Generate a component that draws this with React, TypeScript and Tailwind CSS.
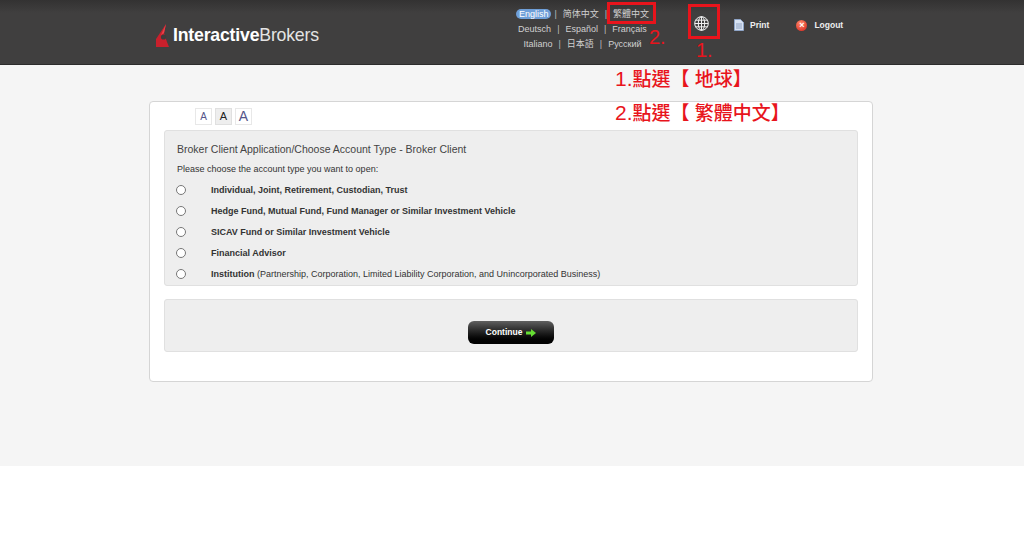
const accountTypes = [
  { label: 'Individual, Joint, Retirement, Custodian, Trust' },
  { label: 'Hedge Fund, Mutual Fund, Fund Manager or Similar Investment Vehicle' },
  { label: 'SICAV Fund or Similar Investment Vehicle' },
  { label: 'Financial Advisor' },
  { label: 'Institution', note: ' (Partnership, Corporation, Limited Liability Corporation, and Unincorporated Business)' },
]

const languageRows = [
  ['Deutsch', 'Español', 'Français'],
  ['Italiano', '日本語', 'Русский'],
]

function Sep() {
  return <span className="mx-[6px] text-[#bbbbbb]">|</span>
}

function Logo() {
  return (
    <div className="flex w-[175px] shrink-0 items-center">
      <svg width="15" height="24" viewBox="0 0 15 24" className="mr-[3px] shrink-0">
        <path d="M11 0 L5 9 L1 15 L1 23 L14 23 L12 18 L9 9 Z" fill="#c8202c" />
        <path d="M11 0 L6 11 L9 9 Z" fill="#e8434a" />
        <circle cx="8.5" cy="13" r="2.6" fill="#3d3c3c" />
      </svg>
      <span className="whitespace-nowrap text-[17.7px] leading-none tracking-[-0.2px] text-white">
        <span className="font-bold">Interactive</span>
        <span className="text-[#e4e4e4]">Brokers</span>
      </span>
    </div>
  )
}

function GlobeIcon() {
  return (
    <svg width="15" height="15" viewBox="0 0 15 15" fill="none" stroke="#f0f0f0" strokeWidth="1">
      <circle cx="7.5" cy="7.5" r="6.8" />
      <ellipse cx="7.5" cy="7.5" rx="3.2" ry="6.8" />
      <path d="M7.5 0.7 V14.3 M0.7 7.5 H14.3 M1.6 4.2 H13.4 M1.6 10.8 H13.4" />
    </svg>
  )
}

function Header() {
  return (
    <header className="flex h-[65px] items-start border-b border-[#2c2c2c] bg-[#3d3c3c] bg-gradient-to-b from-[#333232] to-[#403f3f] to-[20%] pl-[155px]">
      <div className="mt-[24px]">
        <Logo />
      </div>

      <div className="ml-[185px] mt-[7px] w-[135px] shrink-0 text-center text-[9px] leading-[15px] text-[#d0d0d0]">
        <div className="whitespace-nowrap">
          <span className="rounded-[5px] bg-[#6f9fd8] px-[3px] text-white">English</span>
          <span className="mx-[3px] text-[#bbbbbb]">|</span>
          <span className="ml-[3px]">简体中文</span>
          <Sep />
          <span>繁體中文</span>
        </div>
        {languageRows.map((row) => (
          <div key={row[0]} className="whitespace-nowrap">
            {row[0]}
            <Sep />
            {row[1]}
            <Sep />
            {row[2]}
          </div>
        ))}
      </div>

      <div className="ml-[44px] mt-[16px]">
        <GlobeIcon />
      </div>

      <div className="ml-[25px] mt-[18px] flex items-center text-[8.5px] font-bold leading-[14px] text-[#eeeeee]">
        <svg width="10" height="12" viewBox="0 0 10 12" className="mr-[6px]">
          <path d="M0.5 0.5 H6.5 L9.5 3.5 V11.5 H0.5 Z" fill="#d8e2f2" stroke="#8fa5c8" />
          <path d="M2 5 H8 M2 7 H8 M2 9 H8" stroke="#7f92b5" strokeWidth="0.8" />
        </svg>
        Print
      </div>

      <div className="ml-[27px] mt-[18px] flex items-center text-[8.5px] font-bold leading-[14px] text-[#eeeeee]">
        <span className="mr-[7px] flex h-[11px] w-[11px] items-center justify-center rounded-full bg-[radial-gradient(circle_at_40%_30%,#ff8a6a,#d3201a)] text-[9px] font-bold leading-none text-white">
          ×
        </span>
        Logout
      </div>
    </header>
  )
}

function FontSizeButtons() {
  return (
    <div className="ml-[45px] flex items-center gap-[3px] pt-[6px]">
      <button className="flex h-[17px] w-[17px] items-center justify-center border border-[#e8e8e8] bg-white text-[10px] text-[#55558a]">A</button>
      <button className="flex h-[17px] w-[17px] items-center justify-center border border-[#e0e0e0] bg-[#eeeeee] text-[11px] text-[#222222]">A</button>
      <button className="flex h-[17px] w-[17px] items-center justify-center border border-[#e8e8e8] bg-white text-[14px] text-[#55558a]">A</button>
    </div>
  )
}

export default function App() {
  return (
    <div className="relative h-[543px] w-[1024px] overflow-hidden bg-white font-['Liberation_Sans','Noto_Sans_CJK_TC',sans-serif]">
      <Header />

      <main className="h-[401px] bg-[#f5f5f5] pl-[149px] pt-[36px]">
        <div className="h-[281px] w-[724px] rounded-[4px] border border-[#d5d5d5] bg-white">
          <FontSizeButtons />

          <section className="ml-[14px] mt-[5px] h-[156px] w-[694px] rounded-[3px] border border-[#e0e0e0] bg-[#eeeeee] pl-[12px] pt-[11px]">
            <h1 className="text-[10.5px] leading-[14px] text-[#444444]">Broker Client Application/Choose Account Type - Broker Client</h1>
            <p className="mt-[7px] text-[9px] leading-[12px] text-[#333333]">Please choose the account type you want to open:</p>
            <div className="mt-[5px]">
              {accountTypes.map((item) => (
                <label key={item.label} className="flex h-[21px] items-center text-[9px] text-[#333333]">
                  <span className="-ml-[1px] -mt-[1px] h-[10px] w-[10px] rounded-full border border-[#777777] bg-white" />
                  <span className="ml-[25px]">
                    <span className="font-bold">{item.label}</span>
                    {item.note}
                  </span>
                </label>
              ))}
            </div>
          </section>

          <section className="ml-[14px] mt-[13px] flex h-[53px] w-[694px] justify-center rounded-[3px] border border-[#e0e0e0] bg-[#eeeeee] pt-[21px]">
            <button className="flex h-[23px] w-[86px] items-center justify-center rounded-[6px] bg-gradient-to-b from-[#606060] to-black text-[8.5px] font-bold text-white">
              Continue
              <svg width="10" height="8" viewBox="0 0 10 8" className="ml-[4px]">
                <path d="M0 2.5 H5 V0 L10 4 L5 8 V5.5 H0 Z" fill="#66dd33" />
              </svg>
            </button>
          </section>
        </div>
      </main>

      {/* red notes drawn on top of the screenshot */}
      <div className="absolute left-[607px] top-[2px] h-[22px] w-[49px] border-[3px] border-[#e8141c]" />
      <div className="absolute left-[688px] top-[4px] h-[35px] w-[32px] border-[3px] border-[#e8141c]" />
      <div className="absolute left-[649px] top-[26px] text-[20px] leading-[22px] text-[#e8141c]">2.</div>
      <div className="absolute left-[696px] top-[39px] text-[20px] leading-[22px] text-[#e8141c]">1.</div>
      <div className="absolute left-[615px] top-[67px] text-[19px] font-medium leading-[24px] text-[#e8141c]"><span className="text-[21px]">1.</span>點選【 地球】</div>
      <div className="absolute left-[615px] top-[101px] text-[19px] font-medium leading-[24px] text-[#e8141c]"><span className="text-[21px]">2.</span>點選【 繁體中文】</div>
    </div>
  )
}
